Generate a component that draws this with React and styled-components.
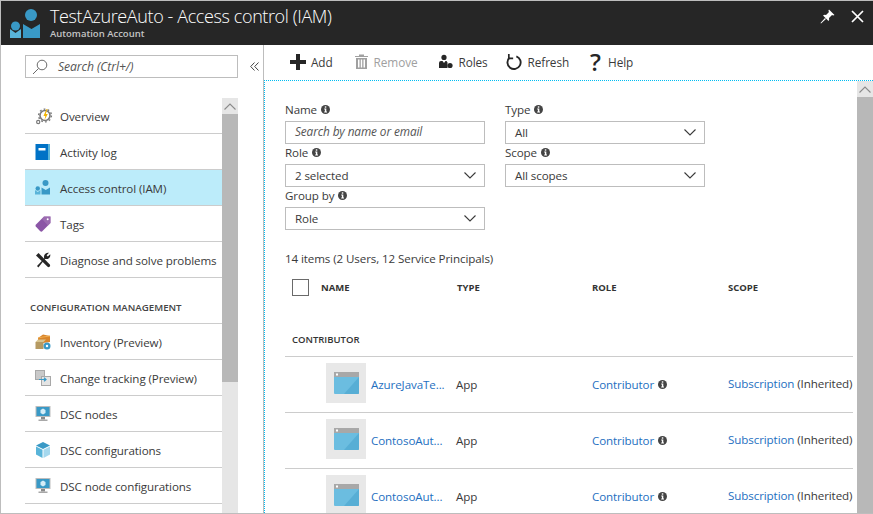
import React from "react";
import styled, { createGlobalStyle } from "styled-components";

const GlobalStyle = createGlobalStyle`
  html, body {
    margin: 0;
    padding: 0;
    background: #fff;
  }
  * {
    box-sizing: border-box;
  }
`;

const navTop = [
  { label: "Overview", icon: "overview" },
  { label: "Activity log", icon: "book" },
  { label: "Access control (IAM)", icon: "iam", active: true },
  { label: "Tags", icon: "tag" },
  { label: "Diagnose and solve problems", icon: "tools" },
];

const navConfig = [
  { label: "Inventory (Preview)", icon: "inventory" },
  { label: "Change tracking (Preview)", icon: "change" },
  { label: "DSC nodes", icon: "monitor" },
  { label: "DSC configurations", icon: "cube" },
  { label: "DSC node configurations", icon: "monitor" },
];

const rows = ["AzureJavaTe...", "ContosoAut...", "ContosoAut..."];

const PeopleIcon = ({ size = 30 }) => (
  <svg width={size} height={size} viewBox="0 0 30 30">
    <circle cx="21" cy="6" r="6" fill="#3999c6" />
    <path d="M13 15 L21.5 20 L30 15 V29 H13Z" fill="#3999c6" />
    <circle cx="5.5" cy="17" r="4.5" fill="#3999c6" />
    <path d="M0 20 L5.5 24 L11 20 V29 H0Z" fill="#59b4d9" />
  </svg>
);

const NavIcon = ({ type }) => {
  if (type === "overview")
    return (
      <svg width="18" height="18" viewBox="0 0 18 18">
        <circle cx="10" cy="8.5" r="5" fill="none" stroke="#7a7a7a" strokeWidth="1.6" />
        <circle cx="10" cy="8.5" r="6.4" fill="none" stroke="#7a7a7a" strokeWidth="1.4" strokeDasharray="1.8 2.2" />
        <circle cx="3.2" cy="15" r="1.6" fill="none" stroke="#7a7a7a" strokeWidth="1.2" />
        <path d="M11.5 2 L8.5 9 H10.3 L9.5 13 L12.8 7 H10.8 L12.5 2Z" fill="#f2b400" />
      </svg>
    );
  if (type === "book")
    return (
      <svg width="16" height="16" viewBox="0 0 16 16">
        <rect x="0.5" y="0" width="14.5" height="16" fill="#0072c6" />
        <rect x="13" y="0" width="2" height="16" fill="#59b4d9" />
        <rect x="3.5" y="4" width="7" height="2.5" fill="#fff" />
      </svg>
    );
  if (type === "iam") return <PeopleIcon size={15} />;
  if (type === "tag")
    return (
      <svg width="16" height="16" viewBox="0 0 16 16">
        <path d="M9 0.5 H15.5 V7 L7 15.5 Q6 16 5 15 L0.8 10.5 Q0 9.5 1 8.5Z" fill="#8b56a6" />
        <path d="M9 0.5 H15.5 V7 L13 9.5 L7 3Z" fill="#a67ab8" opacity="0.6" />
        <circle cx="12.7" cy="3.2" r="1" fill="#fff" />
      </svg>
    );
  if (type === "tools")
    return (
      <svg width="16" height="16" viewBox="0 0 16 16" fill="#262626">
        <path d="M1 3.5 L3.5 1 L14.8 12.6 Q15.6 13.6 14.6 14.7 Q13.6 15.6 12.6 14.8Z" />
        <path d="M2 14 L9.2 6.4 Q8.4 3.6 10.4 1.7 Q12 0.4 14 0.8 L11.6 3.2 L12.8 4.6 L15.2 2.2 Q15.7 4.4 14.2 5.9 Q12.4 7.6 10 6.9 L3.4 15.4Z" />
      </svg>
    );
  if (type === "inventory")
    return (
      <svg width="16" height="16" viewBox="0 0 16 16">
        <path d="M3 4 L8 0.5 L15 2 V8 L8 9 L3 8Z" fill="#d9852b" />
        <path d="M3 4 L8 3 L15 2" fill="none" stroke="#f0ad4e" strokeWidth="1" />
        <rect x="0.5" y="8" width="8" height="7" fill="#b59a62" />
        <path d="M0.5 8 L3 5.5 H11 L8.5 8Z" fill="#d8c48f" />
        <circle cx="12" cy="12" r="3.5" fill="#3999c6" />
        <circle cx="12" cy="12" r="1.2" fill="#fff" />
      </svg>
    );
  if (type === "change")
    return (
      <svg width="16" height="16" viewBox="0 0 16 16">
        <rect x="0.5" y="0.5" width="9" height="9" fill="#c9c9c9" stroke="#a8a8a8" />
        <rect x="6.5" y="6.5" width="9" height="9" fill="#e4e4e4" stroke="#a8a8a8" />
        <path d="M4 9.5 H11 M9 7.8 L11 9.5 L9 11.2" fill="none" stroke="#3999c6" strokeWidth="1.2" />
      </svg>
    );
  if (type === "cube")
    return (
      <svg width="16" height="16" viewBox="0 0 16 16">
        <path d="M8 0 L15 3.5 L8 7 L1 3.5Z" fill="#3999c6" />
        <path d="M1 4.5 L7.5 7.8 V16 L1 12.5Z" fill="#59b4d9" />
        <path d="M15 4.5 L8.5 7.8 V16 L15 12.5Z" fill="#a5d8ee" />
      </svg>
    );
  return (
    <svg width="16" height="16" viewBox="0 0 16 16">
      <rect x="0.5" y="0" width="15" height="11" fill="#bdbdbd" />
      <rect x="1.5" y="1" width="13" height="9" fill="#3999c6" />
      <path d="M8 2.5 L10.5 4 V7 L8 8.5 L5.5 7 V4Z" fill="#d5edf7" />
      <rect x="6" y="11" width="4" height="2.5" fill="#8a8a8a" />
      <rect x="3.5" y="13.5" width="9" height="1.5" fill="#a8a8a8" />
    </svg>
  );
};

const Chevron = ({ up }) => (
  <svg width="12" height="7" viewBox="0 0 12 7">
    <path
      d={up ? "M0.5 6.5 L6 1 L11.5 6.5" : "M0.5 0.5 L6 6 L11.5 0.5"}
      fill="none"
      stroke="currentColor"
      strokeWidth="1.1"
    />
  </svg>
);

const Info = () => (
  <svg width="9" height="9" viewBox="0 0 9 9">
    <circle cx="4.5" cy="4.5" r="4.5" fill="#444" />
    <rect x="3.8" y="1.3" width="1.5" height="1.4" fill="#fff" />
    <path d="M3.2 3.5 H5.3 V6.6 H6 V7.6 H3.2 V6.6 H3.9 V4.5 H3.2Z" fill="#fff" />
  </svg>
);

const AppTile = () => (
  <Tile>
    <svg width="25" height="22" viewBox="0 0 25 22">
      <rect width="25" height="22" rx="1" fill="#6bbde0" />
      <rect width="25" height="5" fill="#a8a8a8" />
      <rect x="2" y="1.5" width="2" height="2" fill="#fff" />
      <path d="M25 5 V22 H10Z" fill="#3999c6" opacity="0.4" />
    </svg>
  </Tile>
);

const Field = ({ label, children }) => (
  <FieldWrap>
    <FieldLabel>
      {label} <Info />
    </FieldLabel>
    {children}
  </FieldWrap>
);

const Select = ({ value }) => (
  <SelectBox>
    {value}
    <Chevron />
  </SelectBox>
);

export default function App() {
  return (
    <>
      <GlobalStyle />
      <Page>
        <Header>
          <LogoSlot>
            <PeopleIcon />
          </LogoSlot>
          <Titles>
            <Title>TestAzureAuto - Access control (IAM)</Title>
            <Subtitle>Automation Account</Subtitle>
          </Titles>
          <HeaderActions>
            <svg width="15" height="15" viewBox="0 0 15 15" fill="#fff">
              <path d="M9 0.5 L14.5 6 L13.2 6.6 L12 6 L9 9 Q9.6 11 8.5 12 L3 6.5 Q4.4 5.4 6 6 L9 3 L8.4 1.8Z" />
              <path d="M5 9 L6 10 L1 14.5 L0.5 14Z" />
            </svg>
            <svg width="13" height="13" viewBox="0 0 13 13">
              <path d="M1 1 L12 12 M12 1 L1 12" stroke="#fff" strokeWidth="1.7" />
            </svg>
          </HeaderActions>
        </Header>
        <Body>
          <Sidebar>
            <SearchRow>
              <SearchBox>
                <svg width="16" height="16" viewBox="0 0 16 16" fill="none" stroke="#6a6a6a">
                  <circle cx="10" cy="6" r="4.8" />
                  <path d="M6.5 9.5 L1 15" />
                </svg>
                Search (Ctrl+/)
              </SearchBox>
              <Collapse>
                <svg width="9" height="9" viewBox="0 0 9 9" fill="none" stroke="#444" strokeWidth="1">
                  <path d="M4.5 0.5 L0.7 4.5 L4.5 8.5 M8.5 0.5 L4.7 4.5 L8.5 8.5" />
                </svg>
              </Collapse>
            </SearchRow>
            <NavArea>
              <NavList>
                {navTop.map((item) => (
                  <NavItem key={item.label} $active={item.active}>
                    <NavIconSlot>
                      <NavIcon type={item.icon} />
                    </NavIconSlot>
                    {item.label}
                  </NavItem>
                ))}
                <SectionTitle>CONFIGURATION MANAGEMENT</SectionTitle>
                {navConfig.map((item) => (
                  <NavItem key={item.label}>
                    <NavIconSlot>
                      <NavIcon type={item.icon} />
                    </NavIconSlot>
                    {item.label}
                  </NavItem>
                ))}
              </NavList>
              <ScrollTrack>
                <ScrollArrow>
                  <Chevron up />
                </ScrollArrow>
                <ScrollThumb $height={268} />
              </ScrollTrack>
            </NavArea>
          </Sidebar>
          <Main>
            <Toolbar>
              <ToolButton $gap={5}>
                <svg width="16" height="16" viewBox="0 0 16 16" fill="#262626">
                  <path d="M6 0 H10 V6 H16 V10 H10 V16 H6 V10 H0 V6 H6Z" />
                </svg>
                Add
              </ToolButton>
              <ToolButton $disabled $left={22}>
                <svg width="13" height="15" viewBox="0 0 13 15" fill="#a0a0a0">
                  <path d="M0 2 H4 V0.5 H9 V2 H13 V3 H0Z" />
                  <path d="M1 4 H12 V15 H1Z M3 5.5 V13.5 H4.5 V5.5Z M5.8 5.5 V13.5 H7.2 V5.5Z M8.5 5.5 V13.5 H10 V5.5Z" fillRule="evenodd" />
                </svg>
                Remove
              </ToolButton>
              <ToolButton $left={21} $gap={5}>
                <svg width="15" height="15" viewBox="0 0 15 15" fill="#262626">
                  <circle cx="6" cy="3.4" r="2.6" />
                  <path d="M1 14 V9 Q1 7 3 7 H4.5 L6 9 L7.5 7 H8.5 L9.5 8.5 V14Z" />
                  <circle cx="12" cy="11.5" r="2.6" />
                </svg>
                Roles
              </ToolButton>
              <ToolButton $left={18}>
                <svg width="16" height="16" viewBox="0 0 17 17" fill="none" stroke="#262626" strokeWidth="2">
                  <path d="M11 2.4 A7 7 0 1 1 3.6 4" />
                  <path d="M3 0 V4.6 H7.6" strokeWidth="1.8" />
                </svg>
                Refresh
              </ToolButton>
              <ToolButton $left={21}>
                <HelpMark>?</HelpMark>
                Help
              </ToolButton>
            </Toolbar>
            <Content>
              <Scroller>
                <Filters>
                  <Field label="Name">
                    <TextInput>Search by name or email</TextInput>
                  </Field>
                  <Field label="Type">
                    <Select value="All" />
                  </Field>
                  <Field label="Role">
                    <Select value="2 selected" />
                  </Field>
                  <Field label="Scope">
                    <Select value="All scopes" />
                  </Field>
                  <Field label="Group by">
                    <Select value="Role" />
                  </Field>
                </Filters>
                <Summary>14 items (2 Users, 12 Service Principals)</Summary>
                <TableHead>
                  <NameHead>
                    <Checkbox />
                    NAME
                  </NameHead>
                  <span>TYPE</span>
                  <span>ROLE</span>
                  <span>SCOPE</span>
                </TableHead>
                <GroupTitle>CONTRIBUTOR</GroupTitle>
                {rows.map((name, i) => (
                  <Row key={i}>
                    <NameCell>
                      <AppTile />
                      <NameLink>{name}</NameLink>
                    </NameCell>
                    <span>App</span>
                    <RoleCell>
                      <Link>Contributor</Link> <Info />
                    </RoleCell>
                    <ScopeCell>
                      <Link>Subscription</Link> (Inherited)
                    </ScopeCell>
                  </Row>
                ))}
              </Scroller>
              <ScrollTrack>
                <ScrollArrow>
                  <Chevron up />
                </ScrollArrow>
                <ScrollThumb $height={417} />
              </ScrollTrack>
            </Content>
          </Main>
        </Body>
      </Page>
    </>
  );
}

const Page = styled.div`
  width: 873px;
  height: 514px;
  display: flex;
  flex-direction: column;
  overflow: hidden;
  border-top: 1px solid #bdbdbd;
  border-left: 1px solid #bdbdbd;
  border-bottom: 1px solid #bdbdbd;
  font-family: "Open Sans", "Noto Sans", sans-serif;
  font-size: 11.6px;
  letter-spacing: -0.1px;
  color: #3a3a3a;
`;

const Header = styled.header`
  flex: none;
  height: 44px;
  display: flex;
  align-items: flex-start;
  background: #262626;
  color: #fff;
`;

const LogoSlot = styled.div`
  width: 49px;
  padding: 8px 0 0 9px;
`;

const Titles = styled.div`
  display: flex;
  flex-direction: column;
`;

const Title = styled.div`
  font-size: 18px;
  font-weight: 300;
  line-height: 28px;
  letter-spacing: -0.39px;
  margin-top: 1px;
`;

const Subtitle = styled.div`
  font-size: 9.5px;
  font-weight: 600;
  line-height: 12px;
  letter-spacing: 0;
  color: #c4c4c4;
  margin-top: -2px;
`;

const HeaderActions = styled.div`
  margin-left: auto;
  display: flex;
  align-items: center;
  gap: 16px;
  padding: 8px 9px 0 0;
`;

const Body = styled.div`
  flex: 1;
  min-height: 0;
  display: flex;
`;

const Sidebar = styled.aside`
  flex: none;
  width: 263px;
  padding-left: 24px;
  display: flex;
  flex-direction: column;
  border-right: 1px solid #bdbdbd;
`;

const SearchRow = styled.div`
  flex: none;
  height: 53px;
  padding-top: 10px;
  display: flex;
  align-items: flex-start;
`;

const SearchBox = styled.div`
  width: 213px;
  height: 23px;
  display: flex;
  align-items: center;
  gap: 10px;
  padding-left: 6px;
  border: 1px solid #bdbdbd;
  font-size: 12.2px;
  font-style: italic;
  color: #555;
`;

const Collapse = styled.div`
  margin-left: 12px;
  padding-top: 7px;
  display: flex;
`;

const NavArea = styled.div`
  flex: 1;
  min-height: 0;
  display: flex;
  width: 213px;
`;

const NavList = styled.nav`
  flex: 1;
  min-width: 0;
`;

const NavItem = styled.div`
  height: 36px;
  padding-top: 2px;
  display: flex;
  align-items: center;
  white-space: nowrap;
  border-bottom: 1px solid #ccc;
  background: ${(p) => (p.$active ? "#bcecfa" : "transparent")};
`;

const NavIconSlot = styled.span`
  width: 35px;
  padding-left: 10px;
  margin-top: -2px;
  display: flex;
  align-items: center;
`;

const SectionTitle = styled.div`
  height: 46px;
  padding: 22px 0 0 5px;
  font-size: 9.7px;
  font-weight: 600;
  line-height: 15px;
  letter-spacing: 0;
  white-space: nowrap;
  border-bottom: 1px solid #ccc;
  color: #444;
`;

const ScrollTrack = styled.div`
  flex: none;
  width: 16px;
  display: flex;
  flex-direction: column;
  background: #e6e6e6;
`;

const ScrollArrow = styled.div`
  flex: none;
  height: 16px;
  display: flex;
  align-items: center;
  justify-content: center;
  color: #8a8a8a;
`;

const ScrollThumb = styled.div`
  flex: none;
  height: ${(p) => p.$height}px;
  background: #b8b8b8;
`;

const Main = styled.main`
  flex: 1;
  min-width: 0;
  display: flex;
  flex-direction: column;
`;

const Toolbar = styled.div`
  flex: none;
  height: 35px;
  display: flex;
  align-items: center;
  padding: 0 0 2px 26px;
  font-size: 11.8px;
`;

const ToolButton = styled.div`
  display: flex;
  align-items: center;
  gap: ${(p) => p.$gap ?? 6}px;
  margin-left: ${(p) => p.$left ?? 0}px;
  color: ${(p) => (p.$disabled ? "#a0a0a0" : "#3a3a3a")};
`;

const HelpMark = styled.span`
  width: 12px;
  font-size: 24px;
  font-weight: 600;
  line-height: 20px;
  color: #262626;
`;

const Content = styled.div`
  flex: 1;
  min-height: 0;
  display: flex;
  border-top: 1px dotted #00bcf2;
  border-left: 1px dotted #00bcf2;
`;

const Scroller = styled.div`
  flex: 1;
  min-width: 0;
  padding: 20px 4px 0 20px;
  overflow: hidden;
`;

const Filters = styled.div`
  display: grid;
  grid-template-columns: 200px 200px;
  column-gap: 20px;
`;

const FieldWrap = styled.div`
  height: 43px;
`;

const FieldLabel = styled.div`
  height: 20px;
  padding-bottom: 3px;
  display: flex;
  align-items: center;
  gap: 4px;
  color: #3a3a3a;
`;

const TextInput = styled.div`
  height: 23px;
  padding-left: 9px;
  line-height: 19px;
  border: 1px solid #bdbdbd;
  font-size: 11.8px;
  font-style: italic;
  color: #555;
`;

const SelectBox = styled.div`
  height: 23px;
  display: flex;
  align-items: center;
  justify-content: space-between;
  padding: 0 8px 0 9px;
  border: 1px solid #bdbdbd;
  color: #3a3a3a;
`;

const Summary = styled.div`
  height: 18px;
  margin-top: 20px;
  line-height: 18px;
`;

const TableHead = styled.div`
  height: 17px;
  margin-top: 11px;
  display: grid;
  grid-template-columns: 172px 135px 136px 1fr;
  align-items: center;
  font-size: 9.5px;
  font-weight: 700;
  letter-spacing: 0;
  color: #333;
`;

const NameHead = styled.div`
  display: flex;
  align-items: center;
  gap: 12px;
  padding-left: 7px;
`;

const Checkbox = styled.span`
  width: 17px;
  height: 17px;
  border: 1px solid #6a6a6a;
`;

const GroupTitle = styled.div`
  height: 61px;
  display: flex;
  align-items: flex-end;
  padding: 0 0 10px 7px;
  font-size: 9.5px;
  font-weight: 600;
  letter-spacing: 0;
  border-bottom: 1px solid #ccc;
  color: #333;
`;

const Row = styled.div`
  height: 56px;
  display: grid;
  grid-template-columns: 171px 136px 136px 1fr;
  align-items: center;
  white-space: nowrap;
  border-bottom: 1px solid #ccc;
`;

const NameCell = styled.div`
  display: flex;
  align-items: center;
  gap: 5px;
  padding-left: 41px;
  margin-bottom: 3px;
`;

const Tile = styled.div`
  width: 40px;
  height: 40px;
  display: flex;
  align-items: center;
  justify-content: center;
  background: #e8e8e8;
`;

const Link = styled.span`
  color: #1e6fbf;
`;

const NameLink = styled(Link)`
  margin-top: 2px;
`;

const RoleCell = styled.div`
  display: flex;
  align-items: center;
  gap: 4px;
`;

const ScopeCell = styled.div`
  margin-bottom: 2px;
`;
